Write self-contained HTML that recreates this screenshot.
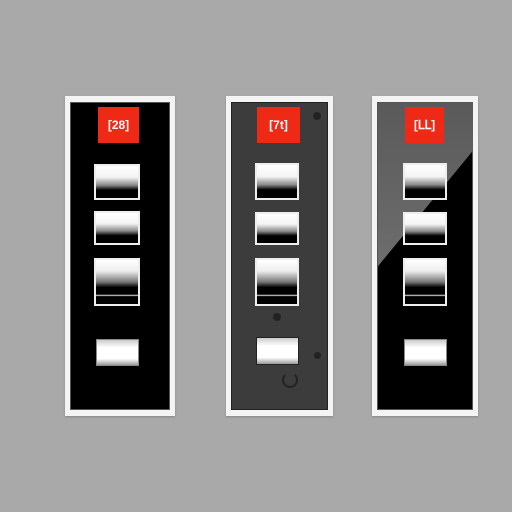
<!DOCTYPE html><html><head><style>
body{margin:0;width:512px;height:512px;background:#a9a9a9;position:relative;overflow:hidden}
div{position:absolute;box-sizing:border-box}
.fr{background:#f4f4f4;top:96px;height:320px;box-shadow:0 1px 2px #888}
.in{top:6px;bottom:6px;left:5px;right:5px;background:#000;border:1px solid #555;overflow:hidden}
.red{background:#ee2a16;color:#fff;font:bold 12px "Liberation Sans",sans-serif;text-align:center;line-height:36px;height:36px;top:107px}
.b{border:2px solid #eee;background:linear-gradient(#fff 0%,#f4f4f4 35%,#888 60%,#000 75%,#000 100%)}
.b3{background:linear-gradient(#fff 0%,#eee 25%,#777 50%,#000 62%,#000 78%,#ddd 80%,#000 83%,#000 100%)}
.b4{border:1px solid #888;background:linear-gradient(#ccc,#fff 30%,#fff 75%,#999)}
</style></head><body>
<div class="fr" style="left:65px;width:110px"><div class="in"></div></div>
<div class="red" style="left:98px;width:41px">[28]</div>
<div class="b" style="left:94px;top:164px;width:46px;height:36px"></div>
<div class="b" style="left:94px;top:211px;width:46px;height:34px"></div>
<div class="b b3" style="left:94px;top:258px;width:46px;height:48px"></div>
<div class="b b4" style="left:96px;top:339px;width:43px;height:27px"></div>

<div class="fr" style="left:226px;width:107px"><div class="in" style="background:#3c3c3c;border-color:#222"></div></div>
<div class="red" style="left:257px;width:43px">[7t]</div>
<div class="b" style="left:255px;top:163px;width:44px;height:37px"></div>
<div class="b" style="left:255px;top:212px;width:44px;height:33px"></div>
<div class="b b3" style="left:255px;top:258px;width:44px;height:48px"></div>
<div class="b b4" style="left:256px;top:337px;width:43px;height:28px;border-color:#222"></div>
<div style="left:313px;top:112px;width:8px;height:8px;border-radius:50%;background:#222"></div>
<div style="left:273px;top:313px;width:8px;height:8px;border-radius:50%;background:#222"></div>
<div style="left:314px;top:352px;width:7px;height:7px;border-radius:50%;background:#222"></div>
<div style="left:282px;top:372px;width:16px;height:16px;border-radius:50%;border:2px solid #222;border-top-color:transparent"></div>

<div class="fr" style="left:372px;width:106px"><div class="in"></div></div>
<div style="left:378px;top:103px;width:95px;height:170px;background:linear-gradient(#5a5a5a,#6e6e6e);clip-path:polygon(0 0,100% 0,100% 28%,0 96%)"></div>
<div class="red" style="left:405px;width:39px">[ᒪᒪ]</div>
<div class="b" style="left:403px;top:163px;width:44px;height:37px"></div>
<div class="b" style="left:403px;top:212px;width:44px;height:33px"></div>
<div class="b b3" style="left:403px;top:258px;width:44px;height:48px"></div>
<div class="b b4" style="left:404px;top:339px;width:43px;height:27px"></div>
</body></html>
